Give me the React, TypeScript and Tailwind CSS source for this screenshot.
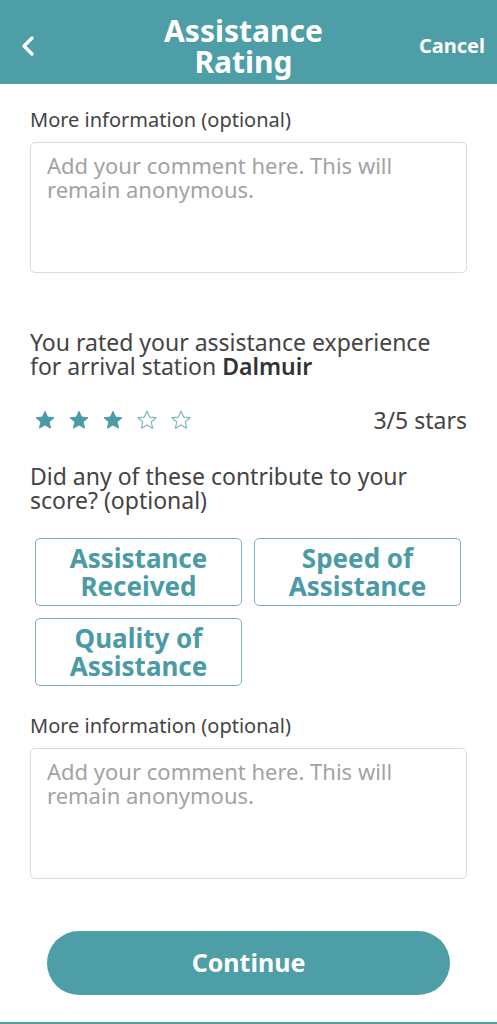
import { ChevronLeft } from "lucide-react";

const teal = "text-[#4a9ba5]";

const Star = ({ filled }: { filled: boolean }) => (
  <svg width="22" height="22" viewBox="0 0 24 24">
    <path
      d="M12 2.5l2.9 6.3 6.9.7-5.2 4.6 1.5 6.8L12 17.4l-6.1 3.5 1.5-6.8-5.2-4.6 6.9-.7z"
      fill={filled ? "#4a9ba5" : "none"}
      stroke={filled ? "#4a9ba5" : "#7fb6bd"}
      strokeWidth={filled ? 1 : 1.3}
      strokeLinejoin="round"
    />
  </svg>
);

const Comment = () => (
  <div className="flex flex-col">
    <p className="text-[20px] leading-6 text-[#444]">More information (optional)</p>
    <div className="mt-2.5 h-[131px] rounded-[5px] border border-[#dcdcdc] px-4 pt-2.5">
      <p className="text-[22px] leading-6 text-[#a3a3a3]">
        Add your comment here. This will
        <br />
        remain anonymous.
      </p>
    </div>
  </div>
);

const Chip = ({ label }: { label: string }) => (
  <button
    className={`h-[68px] rounded-[5px] border-[1.5px] border-[#7db4ba] text-[26px] font-bold leading-[28px] ${teal}`}
  >
    {label}
  </button>
);

const App = () => {
  return (
    <div
      className="flex h-[1024px] w-[497px] flex-col bg-white"
      style={{ fontFamily: '"Noto Sans", sans-serif' }}
    >
      <header className="flex h-[84px] items-center bg-[#4e9ea8] px-3 pt-2 text-white">
        <ChevronLeft className="h-8 w-8" strokeWidth={2.5} />
        <h1 className="flex-1 pl-6 text-center text-[30px] font-bold leading-[31px]">
          Assistance
          <br />
          Rating
        </h1>
        <span className="text-[20px] font-bold">Cancel</span>
      </header>

      <main className="flex flex-1 flex-col px-[30px] pt-[24px]">
        <Comment />

        <p className="mt-[57px] text-[23px] leading-6 text-[#444]">
          You rated your assistance experience
          <br />
          for arrival station <span className="font-semibold text-[#333]">Dalmuir</span>
        </p>

        <div className="mt-[25px] flex items-center justify-between pl-1">
          <div className="flex gap-3">
            {[1, 2, 3, 4, 5].map((n) => (
              <Star key={n} filled={n <= 3} />
            ))}
          </div>
          <span className="text-[23px] text-[#444]">3/5 stars</span>
        </div>

        <p className="mt-[26px] text-[23px] leading-6 text-[#444]">
          Did any of these contribute to your
          <br />
          score? (optional)
        </p>

        <div className="mt-[26px] grid grid-cols-2 gap-x-3 gap-y-3 pl-[5px] pr-[6px]">
          <Chip label={"Assistance Received"} />
          <Chip label={"Speed of Assistance"} />
          <Chip label={"Quality of Assistance"} />
        </div>

        <div className="mt-[28px]">
          <Comment />
        </div>

        <button className="mx-[17px] mt-[52px] h-[64px] rounded-full bg-[#4e9ea8] text-[25px] font-bold text-white">
          Continue
        </button>
      </main>
      <div className="h-[2px] bg-[#4e9ea8]" />
    </div>
  );
};

export default App;
